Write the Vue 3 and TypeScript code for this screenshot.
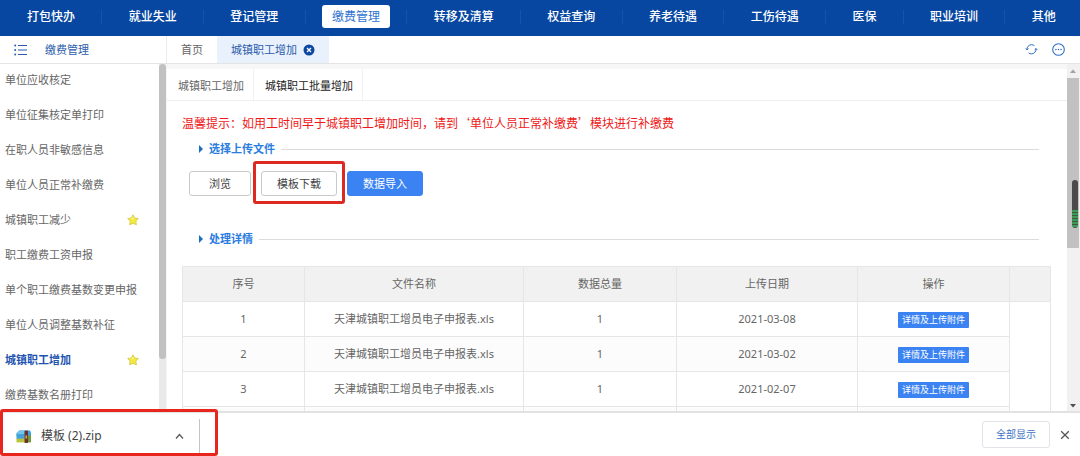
<script setup lang="ts">
import { ref } from 'vue'

interface MenuItem {
  label: string
  starred?: boolean
}

interface FileRow {
  id: number
  name: string
  total: number
  date: string
}

const modules: string[] = [
  '打包快办', '就业失业', '登记管理', '缴费管理', '转移及清算', '权益查询',
  '养老待遇', '工伤待遇', '医保', '职业培训', '其他',
]
const activeModule = ref('缴费管理')

const menu: MenuItem[] = [
  { label: '单位应收核定' },
  { label: '单位征集核定单打印' },
  { label: '在职人员非敏感信息' },
  { label: '单位人员正常补缴费' },
  { label: '城镇职工减少', starred: true },
  { label: '职工缴费工资申报' },
  { label: '单个职工缴费基数变更申报' },
  { label: '单位人员调整基数补征' },
  { label: '城镇职工增加', starred: true },
  { label: '缴费基数名册打印' },
]
const activeMenu = ref('城镇职工增加')

const subTabs: string[] = ['城镇职工增加', '城镇职工批量增加']
const activeSub = ref('城镇职工批量增加')

const columns: string[] = ['序号', '文件名称', '数据总量', '上传日期', '操作']
const rows: FileRow[] = [
  { id: 1, name: '天津城镇职工增员电子申报表.xls', total: 1, date: '2021-03-08' },
  { id: 2, name: '天津城镇职工增员电子申报表.xls', total: 1, date: '2021-03-02' },
  { id: 3, name: '天津城镇职工增员电子申报表.xls', total: 1, date: '2021-02-07' },
]
</script>

<template>
  <div class="app" lang="zh-CN">
    <nav class="modules">
      <template v-for="(m, i) in modules" :key="m">
        <span v-if="i > 0" class="divider"></span>
        <button type="button" class="module" :class="{ active: m === activeModule }" @click="activeModule = m">{{ m }}</button>
      </template>
    </nav>

    <div class="bar">
      <div class="side-title">
        <svg class="list-icon" viewBox="0 0 13 12" aria-hidden="true">
          <path d="M4 1.5H13M4 6H13M4 10.5H13" stroke="#2a5caa" stroke-width="1.1" fill="none" />
          <circle cx="1.2" cy="1.5" r="1" fill="#2a5caa" />
          <circle cx="1.2" cy="6" r="1" fill="#2a5caa" />
          <circle cx="1.2" cy="10.5" r="1" fill="#2a5caa" />
        </svg>
        <span>缴费管理</span>
      </div>
      <div class="page-tabs">
        <button type="button" class="page-tab">首页</button>
        <div class="page-tab current">
          <span>城镇职工增加</span>
          <button type="button" class="icon-btn" aria-label="关闭">
            <svg width="12" height="12" viewBox="0 0 12 12">
              <circle cx="6" cy="6" r="5.5" fill="#0d47a1" />
              <path d="M4 4L8 8M8 4L4 8" stroke="#fff" stroke-width="1.3" />
            </svg>
          </button>
        </div>
      </div>
      <div class="tools">
        <button type="button" class="icon-btn" aria-label="刷新">
          <svg width="13" height="13" viewBox="0 0 13 13" fill="none" stroke="#2f6fc4" stroke-width="1">
            <path d="M2 6.8A4.6 4.6 0 0 1 6.5 1.7A4.6 4.6 0 0 1 9.4 2.7" />
            <path d="M11 5.6A4.6 4.6 0 0 1 6.5 10.9A4.6 4.6 0 0 1 3.6 9.9" />
            <path d="M0.8 5.4L2 6.9L3.4 5.6M9.6 6.9L11 5.5L12.2 7" />
          </svg>
        </button>
        <button type="button" class="icon-btn" aria-label="更多">
          <svg width="13" height="13" viewBox="0 0 13 13">
            <circle cx="6.5" cy="6.5" r="5.8" fill="none" stroke="#2f6fc4" stroke-width="1.1" />
            <circle cx="3.9" cy="6.5" r="0.8" fill="#2f6fc4" />
            <circle cx="6.5" cy="6.5" r="0.8" fill="#2f6fc4" />
            <circle cx="9.1" cy="6.5" r="0.8" fill="#2f6fc4" />
          </svg>
        </button>
      </div>
    </div>

    <div class="body">
      <aside class="side">
        <ul class="menu">
          <li v-for="item in menu" :key="item.label">
            <a href="#" :class="{ active: item.label === activeMenu }" @click.prevent="activeMenu = item.label">{{ item.label }}</a>
            <svg v-if="item.starred" class="star" viewBox="0 0 12 12" aria-hidden="true">
              <path d="M6 0.8L7.6 4L11.3 4.5L8.8 7L9.4 10.8L6 9.2L2.6 10.8L3.2 7L0.7 4.5L4.4 4Z" fill="#f3ea3c" stroke="#d9c94a" stroke-width="0.9" stroke-linejoin="round" />
              <path d="M6 3L6.8 5L4 5.2Z" fill="#fffbb8" />
            </svg>
          </li>
        </ul>
        <div class="side-scroll"><div class="side-thumb"></div></div>
      </aside>

      <main class="main">
        <div class="sub-tabs">
          <button v-for="t in subTabs" :key="t" type="button" class="sub-tab" :class="{ active: t === activeSub }" @click="activeSub = t">{{ t }}</button>
        </div>
        <div class="content">
          <p class="tip">温馨提示：如用工时间早于城镇职工增加时间，请到‘单位人员正常补缴费’模块进行补缴费</p>

          <h2 class="section">选择上传文件</h2>
          <div class="actions">
            <button type="button" class="btn browse">浏览</button>
            <span class="marked"><button type="button" class="btn">模板下载</button></span>
            <button type="button" class="btn primary">数据导入</button>
          </div>

          <h2 class="section">处理详情</h2>
          <table class="files">
            <colgroup>
              <col class="c-no" /><col /><col class="c-total" /><col class="c-date" /><col class="c-op" /><col class="c-end" />
            </colgroup>
            <thead>
              <tr>
                <th v-for="c in columns" :key="c" scope="col">{{ c }}</th>
                <td></td>
              </tr>
            </thead>
            <tbody>
              <tr v-for="r in rows" :key="r.id">
                <td>{{ r.id }}</td>
                <td>{{ r.name }}</td>
                <td>{{ r.total }}</td>
                <td>{{ r.date }}</td>
                <td><button type="button" class="detail">详情及上传附件</button></td>
                <td class="end"></td>
              </tr>
              <tr>
                <td></td><td></td><td></td><td></td><td></td><td class="end"></td>
              </tr>
            </tbody>
          </table>
        </div>
      </main>

      <div class="scroll">
        <svg class="arrow" viewBox="0 0 12 14" aria-hidden="true"><path d="M3 9L6 5.5L9 9Z" fill="#a3a3a3" /></svg>
        <div class="thumb"></div>
        <svg class="arrow down" viewBox="0 0 12 14" aria-hidden="true"><path d="M3 7L6 10.5L9 7Z" fill="#505050" /></svg>
        <div class="meter"></div>
      </div>
    </div>

    <footer class="downloads">
      <div class="download">
        <svg class="zip" viewBox="0 0 14 12" aria-hidden="true">
          <path d="M0.5 3L3 0.5H13L14 2V6H0.5Z" fill="#3fa3dc" />
          <path d="M0.5 3L3 0.5H8V4H0.5Z" fill="#74c4ec" />
          <rect x="0.5" y="4" width="8" height="4.5" fill="#45a0dc" />
          <rect x="0.5" y="8" width="8" height="3.5" fill="#b9c43a" />
          <rect x="11" y="5" width="3" height="6.5" fill="#6f9a3a" />
          <rect x="8" y="0.5" width="3.2" height="11.5" fill="#6a2f2a" />
          <rect x="8.8" y="5" width="1.6" height="3" fill="#d9a04a" />
        </svg>
        <a href="#" class="file" @click.prevent>模板 (2).zip</a>
        <button type="button" class="icon-btn" aria-label="更多选项">
          <svg width="9" height="7" viewBox="0 0 9 7"><path d="M1 5.5L4.5 1.5L8 5.5" fill="none" stroke="#555" stroke-width="1.2" /></svg>
        </button>
        <span class="rule"></span>
      </div>
      <button type="button" class="show-all">全部显示</button>
      <button type="button" class="icon-btn" aria-label="关闭下载栏">
        <svg width="10" height="10" viewBox="0 0 10 10"><path d="M1.2 1.2L8.8 8.8M8.8 1.2L1.2 8.8" stroke="#555" stroke-width="1.3" /></svg>
      </button>
    </footer>
  </div>
</template>

<style>
body {
  margin: 0;
}
</style>

<style scoped>
.app {
  display: flex;
  flex-direction: column;
  height: 100vh;
  overflow: hidden;
  background: #fff;
  color: #666;
  font-family: "Noto Sans", "Noto Sans CJK SC", sans-serif;
  font-size: 11px;
  line-height: 16px;
}
.app *,
.app *::before,
.app *::after {
  box-sizing: border-box;
}
button {
  margin: 0;
  padding: 0;
  border: 0;
  background: none;
  color: inherit;
  font: inherit;
  white-space: nowrap;
  cursor: pointer;
}
a {
  color: inherit;
  text-decoration: none;
}
.icon-btn {
  display: flex;
  align-items: center;
}

.modules {
  display: flex;
  flex: none;
  justify-content: space-between;
  align-items: center;
  padding: 5px 14px 8px 17px;
  background: #0747a1;
  color: #fff;
  font-size: 12px;
}
.module {
  padding: 0 10px;
  border-radius: 3px;
  font-weight: 500;
  line-height: 23px;
}
.module.active {
  background: #fff;
  color: #2f73d0;
  font-weight: 400;
}
.divider {
  width: 1px;
  height: 14px;
  background: #1553ad;
}

.bar {
  display: flex;
  flex: none;
  height: 28px;
  border-bottom: 1px solid #e4e4e4;
}
.side-title {
  display: flex;
  align-items: center;
  gap: 18px;
  width: 167px;
  padding-left: 14px;
  border-right: 1px solid #ececec;
  color: #2a5caa;
}
.list-icon {
  width: 13px;
  height: 12px;
}
.page-tabs {
  display: flex;
  flex: 1;
}
.page-tab {
  display: flex;
  align-items: center;
  padding: 0 14px;
}
.page-tab.current {
  gap: 6px;
  background: #e9f1fc;
  color: #2a5caa;
}
.tools {
  display: flex;
  align-items: center;
  gap: 14px;
  padding-right: 15px;
}

.body {
  display: flex;
  flex: 1;
  min-height: 0;
}
.side {
  display: flex;
  width: 167px;
  flex: none;
  overflow: hidden;
}
.menu {
  flex: 1;
  margin: 0;
  padding: 0;
  list-style: none;
}
.menu li {
  display: flex;
  align-items: center;
  justify-content: space-between;
  padding: 0 20px 3px 5px;
  line-height: 32px;
  white-space: nowrap;
}
.menu .active {
  color: #1f55b0;
  font-weight: 700;
}
.menu a {
  flex: 1;
  min-width: 0;
}
.star {
  width: 12px;
  height: 12px;
}
.side-scroll {
  width: 8px;
  border-right: 1px solid #f4f4f4;
  background: #e9e9e9;
}
.side-thumb {
  height: 85%;
  border-radius: 4px;
  background: #c1c1c1;
}

.main {
  flex: 1;
  min-width: 0;
  overflow: hidden;
  border-top: 5px solid #f7f7f7;
}
.sub-tabs {
  display: flex;
  border-bottom: 1px solid #efefef;
}
.sub-tab {
  padding: 2px 9px 0 11px;
  border-right: 1px solid #f1f1f1;
  line-height: 29px;
}
.sub-tab.active {
  color: #222;
}
.content {
  padding: 13px 16px 0 15px;
}
.tip {
  margin: 0 0 9px;
  color: #f01818;
  font-family: "Noto Sans CJK SC", sans-serif;
  font-size: 12px;
  line-height: 18px;
}
.section {
  display: flex;
  align-items: center;
  gap: 6px;
  margin: 0;
  padding: 0 12px 0 17px;
  color: #2b7de0;
  font-size: 11px;
  font-weight: 700;
  line-height: 16px;
}
.section::before {
  border: solid transparent;
  border-width: 4px 0 4px 4px;
  border-left-color: #1a6fc0;
  content: "";
}
.section::after {
  flex: 1;
  height: 1px;
  background: #dcdcdc;
  content: "";
}
.actions {
  display: flex;
  gap: 10px;
  padding: 14px 7px 35px;
}
.btn {
  padding: 0 15px;
  border: 1px solid #c9c9c9;
  border-radius: 3px;
  background: #fff;
  color: #444;
  line-height: 23px;
}
.browse {
  padding: 0 19px;
}
.btn.primary {
  border-color: #3b82f2;
  background: #3b82f2;
  color: #fff;
}
.marked {
  position: relative;
}
.marked::after {
  position: absolute;
  inset: -10px -8px -8px;
  border: 3px solid #dc2a22;
  border-radius: 3px;
  pointer-events: none;
  content: "";
}

.files {
  width: 100%;
  margin-top: 19px;
  border: 1px solid #e6e6e6;
  border-collapse: collapse;
  table-layout: fixed;
}
.c-no {
  width: 122px;
}
.c-total {
  width: 153px;
}
.c-date {
  width: 181px;
}
.c-op {
  width: 152px;
}
.c-end {
  width: 41px;
}
.files th,
.files td {
  height: 35px;
  padding: 0;
  border: 1px solid #e6e6e6;
  font-weight: 400;
  text-align: center;
}
.files thead {
  background: #f1f1f1;
}
.files tbody tr:nth-child(even) td {
  background: #fcfcfc;
}
.files tbody tr .end.end {
  border-top-color: transparent;
  border-bottom-color: transparent;
  background: #fff;
}
.detail {
  padding: 0 4px;
  border-radius: 1px;
  background: #3b82f2;
  color: #fff;
  font-size: 9px;
  line-height: 16px;
}

.scroll {
  position: relative;
  display: flex;
  flex: none;
  flex-direction: column;
  width: 13px;
  padding-right: 1px;
  background: #f1f1f1;
}
.arrow {
  width: 12px;
  height: 14px;
}
.thumb {
  height: 49%;
  background: #c1c1c1;
}
.arrow.down {
  margin-top: auto;
}
.meter {
  position: absolute;
  top: 116px;
  right: 2px;
  width: 6px;
  height: 48px;
  border-radius: 3px;
  background: linear-gradient(#4a4a4a 62%, transparent 62%), repeating-linear-gradient(#3f9a58 0 2px, #3b5a42 2px 3px);
}

.downloads {
  display: flex;
  flex: none;
  align-items: center;
  height: 45px;
  padding-right: 10px;
  border-top: 2px solid #e2e2e2;
}
.download {
  position: relative;
  display: flex;
  align-items: center;
  width: 218px;
  height: 43px;
  padding: 3px 18px 0 16px;
}
.download::after {
  position: absolute;
  inset: -4px 0 0;
  border: 3px solid #e8261e;
  border-radius: 3px;
  pointer-events: none;
  content: "";
}
.zip {
  width: 15px;
  height: 13px;
}
.file {
  flex: 1;
  margin-left: 10px;
  color: #444;
  font-size: 12px;
}
.rule {
  width: 1px;
  height: 34px;
  margin-left: 15px;
  background: #c4c4c4;
}
.show-all {
  margin: 0 10px 0 auto;
  padding: 0 13px;
  border: 1px solid #e0e3e8;
  border-radius: 3px;
  color: #3c72c4;
  font-size: 10px;
  line-height: 25px;
}
</style>
